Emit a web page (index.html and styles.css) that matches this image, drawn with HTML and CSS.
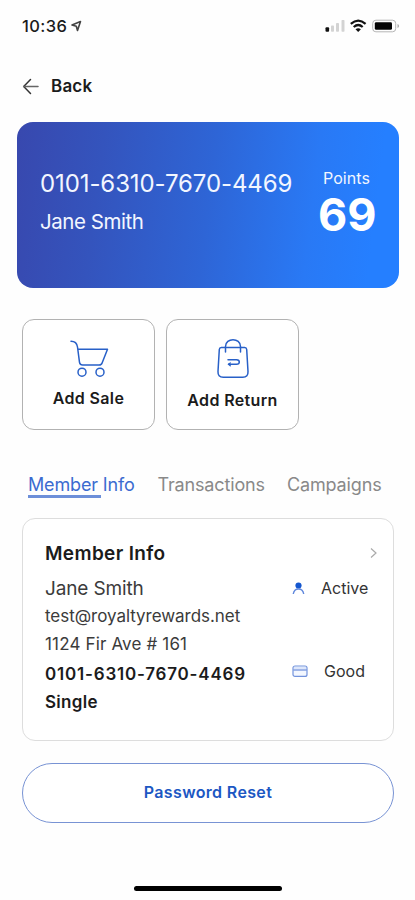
FILE: index.html
```html
<!DOCTYPE html>
<html lang="en">
<head>
<meta charset="utf-8">
<meta name="viewport" content="width=device-width, initial-scale=1">
<title>Member</title>
<link rel="stylesheet" href="styles.css">
</head>
<body>
<div class="screen">
  <div class="status">
    <span class="time">10:36</span>
    <svg class="locate" width="11" height="12" viewBox="0 0 11 12"><path d="M1 5 9.5 1.5 6.500 10.500 5.300 6.200Z" fill="none" stroke="#444" stroke-width="1.600" stroke-linejoin="round"/></svg>
    <svg class="system" width="76" height="16" viewBox="0 0 76 16">
      <rect x="1.500" y="9.300" width="3.600" height="4.400" rx="1" fill="#111"/>
      <g fill="#d3d3d3"><rect x="7" y="7.500" width="3" height="6.300" rx=".8"/><rect x="12" y="5" width="3" height="8.800" rx=".8"/><rect x="17.500" y="2" width="3" height="11.800" rx=".8"/></g>
      <g fill="none" stroke="#111" stroke-width="2.200"><path d="M26.800 5.900Q34.200-.5 41.600 5.900"/><path d="M29.700 9Q34.200 5 38.700 9"/></g>
      <path d="M31.500 11.300Q34.200 9.200 36.900 11.300L34.200 14Z" fill="#111"/>
      <rect x="48.700" y="2.200" width="23" height="11.600" rx="3.200" fill="none" stroke="#b5b5b5"/>
      <rect x="50.800" y="4.200" width="17.200" height="7.600" rx="1.400" fill="#050505"/>
      <path d="M73.500 6v4q1.600-.7 1.600-2T73.500 6Z" fill="#aaa"/>
    </svg>
  </div>
  <header class="back">
    <svg width="18" height="18" viewBox="0 0 18 18" fill="none" stroke="#333" stroke-width="1.500" stroke-linecap="round" stroke-linejoin="round"><path d="M8.500 2.500 1.700 9.500l6.800 7"/><path d="M1.700 9.500H16" stroke="#666"/></svg>
    <span class="back-label">Back</span>
  </header>
  <section class="card">
    <div class="card-owner">
      <div class="card-number">0101-6310-7670-4469</div>
      <div class="card-name">Jane Smith</div>
    </div>
    <div class="card-points">
      <div class="points-label">Points</div>
      <div class="points-value">69</div>
    </div>
  </section>
  <div class="tiles">
    <button class="tile">
      <svg width="42" height="42" viewBox="0 0 42 42" fill="none" stroke="#2860c8" stroke-width="1.500" stroke-linecap="round" stroke-linejoin="round"><path d="M3 3.200C6.800 3.200 9 5.300 9.500 9L11.500 24.300Q12 27 14.600 27H31.200Q33.500 27 34.200 24.700L39.500 11.300H9.800"/><circle cx="14" cy="34.200" r="4"/><circle cx="32" cy="34.200" r="4"/></svg>
      <span class="sale-label">Add Sale</span>
    </button>
    <button class="tile">
      <svg width="42" height="44" viewBox="0 0 42 44" fill="none" stroke="#2860c8" stroke-width="1.500" stroke-linecap="round" stroke-linejoin="round"><path d="M9.300 9.600H32.700Q34.500 9.600 34.700 11.500L36 33.500Q36.300 39.300 30.800 39.300H11.200Q5.700 39.300 6 33.500L7.300 11.500Q7.500 9.600 9.300 9.600Z"/><path d="M13.500 14V8.500C13.500-.5 28.500-.5 28.500 8.500V14"/><path d="M16 21.700H24.500Q27.300 21.700 27.300 24T24.500 26.300H16.500"/><path d="M18.300 25 16.500 26.300 18.300 27.800" stroke-width="1.300"/></svg>
      <span class="return-label">Add Return</span>
    </button>
  </div>
  <nav class="tabs">
    <a class="tab tab-info">Member Info</a>
    <a class="tab tab-trans">Transactions</a>
    <a class="tab tab-camp">Campaigns</a>
  </nav>
  <section class="panel">
    <div class="panel-head">
      <span class="panel-title">Member Info</span>
      <svg width="9" height="12" viewBox="0 0 9 12" fill="none" stroke="#aaa" stroke-width="1.200"><path d="m2 1.500 5 4.500-5 4.500"/></svg>
    </div>
    <div class="panel-body">
      <div class="details">
        <span class="name">Jane Smith</span>
        <span class="email">test@royaltyrewards.net</span>
        <span class="address">1124 Fir Ave # 161</span>
        <span class="number">0101-6310-7670-4469</span>
        <span class="marital">Single</span>
      </div>
      <div class="states">
        <div class="state">
          <svg width="16" height="16" viewBox="0 0 16 16"><circle cx="7.500" cy="5.500" r="3.100" fill="#1557cf"/><path d="M2.300 14Q3 9 7.500 9T12.700 14" fill="none" stroke="#5f87dc" stroke-width="1.400"/></svg>
          <span class="active-label">Active</span>
        </div>
        <div class="state">
          <svg width="17" height="14" viewBox="0 0 17 14"><rect x="2" y="2" width="14" height="10.400" rx="2" fill="#f3f7ff" stroke="#7393dc" stroke-width="1.200"/><path d="M2.300 6h13.500" stroke="#7393dc" stroke-width="1.300"/><path d="M2.800 4h12.500" stroke="#c7d6f7"/></svg>
          <span class="good-label">Good</span>
        </div>
      </div>
    </div>
  </section>
  <button class="reset"><span>Password Reset</span></button>
  <div class="home"></div>
</div>
</body>
</html>
```
FILE: styles.css
```css
* { box-sizing: border-box; }
body { margin: 0; background: #fefefe; font-family: Inter, "Liberation Sans", sans-serif; color: #1b1b1b; }
button { font: inherit; color: inherit; margin: 0; padding: 0; background: #fff; }
svg { display: block; flex: none; }
span { white-space: nowrap; }
.screen { width: 415px; height: 900px; overflow: hidden; display: flex; flex-direction: column; }
.status { height: 52px; padding: 0 15px 0 22px; display: flex; align-items: center; }
.time { font-size: 16.5px; font-weight: 500; letter-spacing: .4px; }
.locate { margin-left: 4px; }
.system { margin-left: auto; }
.back { height: 70px; padding: 0 22px 2px; display: flex; align-items: center; gap: 11px; }
.back-label { font-size: 17px; font-weight: 600; letter-spacing: .2px; }
.card { margin: 0 16px 0 17px; height: 166px; border-radius: 16px; background: linear-gradient(97deg, #3848ae 0%, #3454bd 22%, #2e65d6 50%, #2979f5 76%, #257fff 92%); color: #f2f6ff; display: flex; justify-content: space-between; padding: 46px 24px 0 23px; }
.card-number { font-size: 24px; line-height: 32px; letter-spacing: -.1px; white-space: nowrap; }
.card-name { font-size: 20.5px; line-height: 28px; margin-top: 8px; letter-spacing: -.45px; }
.card-points { text-align: center; width: 57px; padding-top: 1px; }
.points-label { font-size: 16px; line-height: 19px; letter-spacing: .1px; }
.points-value { font-size: 45px; line-height: 54px; font-weight: 700; color: #fff; }
.tiles { display: flex; gap: 11px; margin: 31px 0 0 22px; }
.tile { width: 133px; height: 111px; border: 1px solid #b2b2b2; border-radius: 12px; display: flex; flex-direction: column; align-items: center; padding-top: 18px; font-size: 16px; font-weight: 600; line-height: 20px; letter-spacing: .35px; }
.sale-label { margin-top: 8px; }
.return-label { margin-top: 8px; }
.tabs { display: flex; margin: 42px 0 0 28px; height: 46px; font-size: 18px; line-height: 26px; letter-spacing: -.15px; color: #898989; }
.tab { white-space: nowrap; }
.tab-info { color: #3b6bd0; width: 129.5px; }
.tab-info::after { content: ""; display: block; width: 73px; height: 2.5px; margin-top: -3px; background: #6d8fd9; }
.tab-trans { width: 129.5px; }
.panel { margin: 0 21px 0 22px; height: 223px; border: 1px solid #ddd; border-radius: 13px; padding: 19px 15px 0 22px; background: #fff; }
.panel-head { display: flex; align-items: center; justify-content: space-between; height: 30px; }
.panel-title { font-size: 19px; font-weight: 600; letter-spacing: .35px; }
.panel-body { display: flex; justify-content: space-between; }
.details { display: flex; flex-direction: column; line-height: 28px; font-size: 17px; color: #3b3b3b; padding-top: 7px; }
.name { font-size: 19px; letter-spacing: -.15px; }
.email { letter-spacing: -.04px; margin-top: -1px; }
.address { letter-spacing: .15px; }
.number, .marital { font-weight: 600; color: #1b1b1b; }
.number { padding-top: 2px; letter-spacing: .8px; }
.marital { letter-spacing: .3px; }
.states { width: 87px; display: flex; flex-direction: column; gap: 55px; padding-top: 6px; color: #333; }
.state { display: flex; align-items: center; height: 28px; font-size: 16px; }
.active-label { margin-left: 14px; }
.good-label { margin-left: 16px; }
.reset { margin: 22px 21px 0 22px; height: 60px; border: 1px solid #7893d4; border-radius: 30px; padding-bottom: 2px; color: #1c57c3; font-size: 16px; font-weight: 600; letter-spacing: .35px; }
.home { width: 148px; height: 5px; border-radius: 3px; background: #000; margin: 63px 0 0 134px; }
```
